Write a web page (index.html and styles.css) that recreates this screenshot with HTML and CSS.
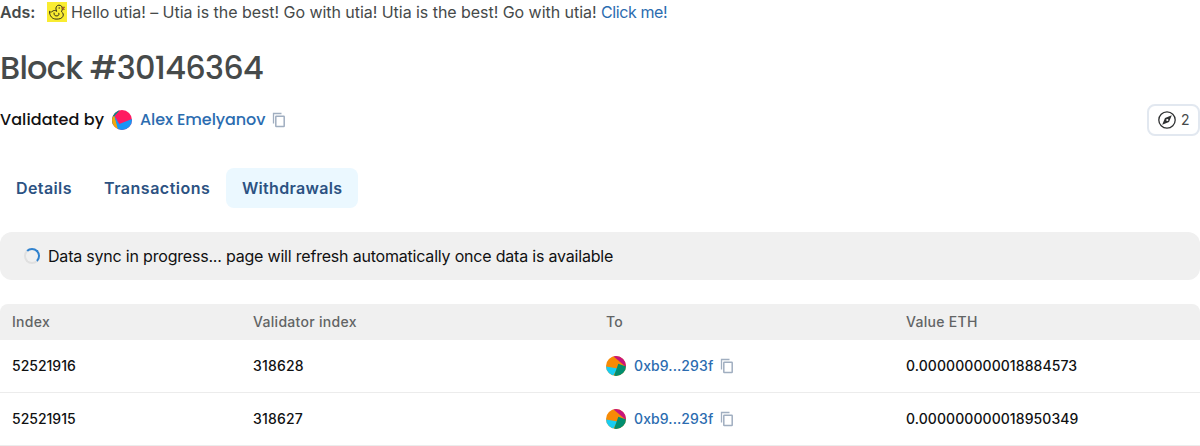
FILE: index.html
```
<!DOCTYPE html>
<html lang="en">
<head>
<meta charset="utf-8">
<title>Block #30146364</title>
<link rel="stylesheet" href="styles.css">
</head>
<body>
<svg class="defs" width="0" height="0" aria-hidden="true">
  <symbol id="copy" viewBox="0 0 14 16">
    <path d="M1.500 11.500V1.500H9.500" fill="none" stroke="#a0aec0" stroke-width="1.300"/>
    <rect x="3.800" y="4.200" width="8.400" height="10.200" rx=".5" fill="none" stroke="#a0aec0" stroke-width="1.500"/>
  </symbol>
  <symbol id="avatar-to" viewBox="0 0 20 20">
    <clipPath id="disc"><circle cx="10" cy="10" r="10"/></clipPath>
    <g clip-path="url(#disc)">
      <path d="M0 0H20V20H0z" fill="#f78a05"/>
      <path d="M7 0H20V11z" fill="#c7147d"/>
      <path d="M0 10.500L11.500 12.500 7 20H0z" fill="#18cdf2"/>
      <path d="M12.300 7.800L20 10.500V20H8z" fill="#018e6f"/>
    </g>
  </symbol>
</svg>
<div class="ad">
  <b class="ad-label">Ads:</b>
  <svg class="duck" viewBox="0 0 20 20">
    <path d="M0 0H20V20H0z" fill="#f9ec31"/>
    <g fill="none" stroke="#302d18" stroke-width="1" stroke-linecap="round" stroke-linejoin="round">
      <path d="M9.500 9C8 6 9.400 3.200 12 3.200c2.400 0 3.800 2 3.300 4.300-.3 1.200-.8 1.700-.8 2.300 1.800 1.200 2.200 3 1.400 4.600C14.800 16.600 12.200 17.200 9 17.100 5 16.900 2.600 14 2.500 9.300c1.400 1.200 2 1 2.700.1C6.500 8.300 8 8.200 9.500 9z"/>
      <path d="M7 11c-.2 2.200 1.200 3.200 3.200 2.900 1.700-.3 2.100-1.400 1.600-2.700"/>
    </g>
    <circle cx="12.200" cy="6" r=".7" fill="#302d18"/>
    <path d="M15 5.200L17.700 5 16.700 6.400 17.500 7.500 15.200 7.600z" fill="#e96b24" stroke="#302d18" stroke-width=".4"/>
  </svg>
  <span class="ad-text">Hello utia! – Utia is the best! Go with utia! Utia is the best! Go with utia! <a class="link ad-link">Click me!</a></span>
</div>
<h1 class="title">Block #30146364</h1>
<div class="validator">
  <span class="by">Validated by</span>
  <svg class="avatar" viewBox="0 0 20 20">
    <g clip-path="url(#disc)">
      <path d="M0 0H20V20H0z" fill="#ff1b61"/>
      <path d="M0 0H8L2.500 6 6 14 0 18z" fill="#058c86"/>
      <path d="M0 7L2.500 6 7 20H0z" fill="#f5a70a"/>
      <path d="M2.500 6L7.300 14 20 9V20H6z" fill="#1995f5"/>
    </g>
  </svg>
  <a class="name link">Alex Emelyanov</a>
  <svg class="copy"><use href="#copy"/></svg>
  <div class="explorers">
    <svg class="compass" viewBox="0 0 18 18">
      <circle cx="9" cy="9" r="8.200" fill="none" stroke="#303233" stroke-width="1.300"/>
      <path fill-rule="evenodd" d="M13.800 4.200L11 11 4.200 13.800 7 7zM9.300 7.900a1.100 1.100 0 1 0 0 2.200 1.100 1.100 0 0 0 0-2.200z" fill="#303233"/>
    </svg>
    <span class="count">2</span>
  </div>
</div>
<nav class="tabs">
  <a class="tab details">Details</a><a class="tab transactions">Transactions</a><a class="tab active">Withdrawals</a>
</nav>
<div class="notice"><span class="spinner"></span><span class="notice-text">Data sync in progress... page will refresh automatically once data is available</span></div>
<div class="table">
  <div class="row head"><span>Index</span><span>Validator index</span><span>To</span><span>Value ETH</span></div>
  <div class="row">
    <span>52521916</span><span class="index">318628</span>
    <span class="address"><svg class="avatar"><use href="#avatar-to"/></svg><a class="link hash">0xb9...293f</a><svg class="copy"><use href="#copy"/></svg></span>
    <span class="value">0.000000000018884573</span>
  </div>
  <div class="row">
    <span>52521915</span><span class="index">318627</span>
    <span class="address"><svg class="avatar"><use href="#avatar-to"/></svg><a class="link hash">0xb9...293f</a><svg class="copy"><use href="#copy"/></svg></span>
    <span class="value">0.000000000018950349</span>
  </div>
</div>
</body>
</html>
```
FILE: styles.css
```
* { box-sizing: border-box; }
body { margin: 0; background: #fff; color: #101112; font: 400 16px/24px Inter, sans-serif; overflow: hidden; }
svg { display: block; flex: none; }
.defs { position: absolute; }
.link { color: #2b6cb0; }
.ad { display: flex; height: 24px; align-items: center; color: #464a4a; white-space: nowrap; }
.ad-label { width: 47px; font-weight: 600; }
.duck { width: 20px; height: 20px; margin-right: 4px; }
.ad-text { letter-spacing: -.045px; }
.ad-link { letter-spacing: -.4px; }
.title { margin: 24px 0 0; font: 500 32px/40px Poppins, Inter, sans-serif; color: #464a4a; letter-spacing: -.77px; }
.validator { display: flex; height: 32px; margin-top: 16px; align-items: center; font-family: Poppins, Inter, sans-serif; font-weight: 500; white-space: nowrap; }
.by { width: 112px; letter-spacing: .08px; }
.name { letter-spacing: -.08px; }
.avatar { width: 20px; height: 20px; margin-right: 8px; }
.copy { width: 14px; height: 16px; margin-left: 7px; }
.explorers { display: flex; align-items: center; gap: 5px; width: 53px; height: 32px; margin-left: auto; padding-left: 9px; border: 2px solid #e2e8f0; border-radius: 8px; color: #464a4a; font: 400 14px/20px Inter, sans-serif; }
.compass { width: 18px; height: 18px; }
.tabs { display: flex; height: 40px; margin-top: 32px; }
.tab { padding: 8px 16px; border-radius: 8px; color: #2c5282; font-weight: 600; letter-spacing: .4px; }
.details { width: 88px; }
.transactions { width: 138px; letter-spacing: .5px; }
.active { width: 132px; background: #ebf8ff; letter-spacing: .3px; }
.notice { display: flex; height: 48px; margin-top: 24px; padding: 0 24px; align-items: center; gap: 8px; border-radius: 12px; background: #f0f0f0; white-space: nowrap; }
.notice-text { letter-spacing: -.2px; }
.spinner { width: 16px; height: 16px; border: 2px solid #e0e0e0; border-top-color: #3182ce; border-right-color: #3182ce; border-radius: 50%; }
.table { margin-top: 24px; font-size: 14px; font-weight: 500; line-height: 20px; }
.row { display: grid; grid-template-columns: 241px 353px 300px 1fr; height: 53px; padding-left: 12px; align-items: center; border-bottom: 1px solid #ececec; }
.head { height: 36px; border: 0; border-radius: 8px 8px 0 0; background: #f0f0f0; color: #626465; letter-spacing: .3px; }
.address { display: flex; align-items: center; }
.index { letter-spacing: .2px; }
.hash { letter-spacing: .1px; }
.value { letter-spacing: .08px; }
```
